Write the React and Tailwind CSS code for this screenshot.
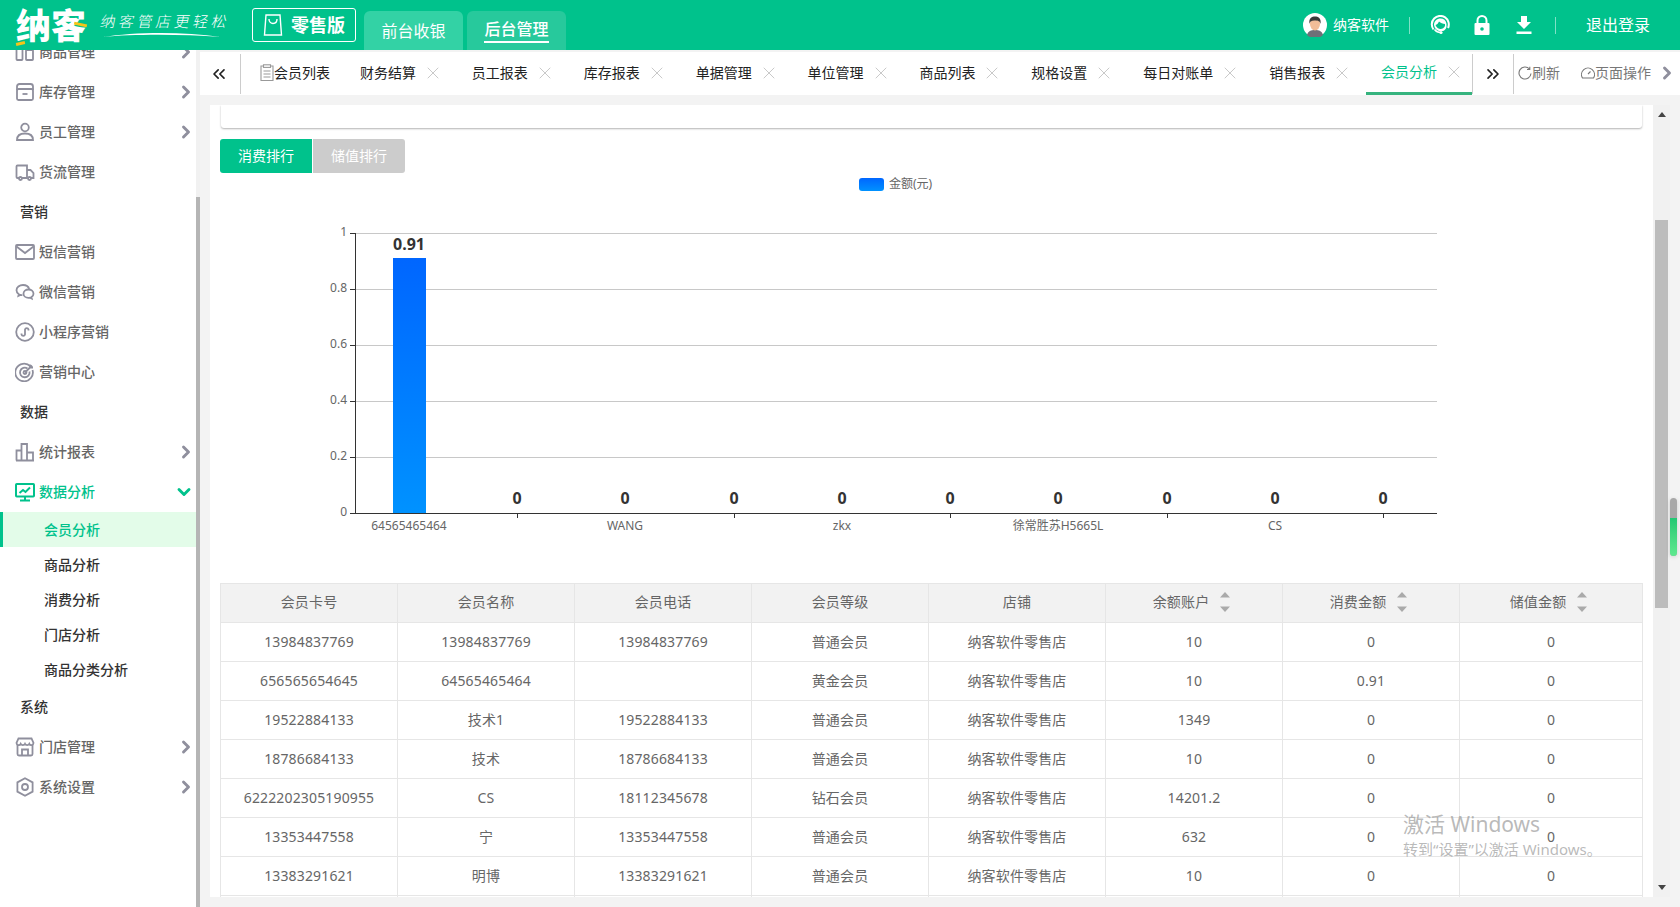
import React from "react";
import { ChevronRight, ChevronDown, ChevronsLeft, ChevronsRight, X } from "lucide-react";

const ICON = "w-5 h-5 shrink-0 fill-none stroke-[#8f8f9d] stroke-[1.8]";

const GoodsIcon = () => (
  <svg viewBox="0 0 20 20" className={ICON}>
    <rect x="1.5" y="2" width="6" height="16" rx="0.8" />
    <rect x="11" y="8" width="7" height="10" rx="0.8" />
  </svg>
);
const StockIcon = () => (
  <svg viewBox="0 0 20 20" className={ICON}>
    <path d="M2 8V4.500C2 3 3 2 4.500 2h11C17 2 18 3 18 4.500V8" />
    <rect x="2" y="7" width="16" height="11" rx="1.500" />
    <path d="M7.500 12h5" />
  </svg>
);
const StaffIcon = () => (
  <svg viewBox="0 0 20 20" className={ICON}>
    <circle cx="10" cy="5.500" r="3.800" />
    <path d="M2 18c0-4 3-6.500 8-6.500s8 2.500 8 6.500z" />
  </svg>
);
const TruckIcon = () => (
  <svg viewBox="0 0 20 20" className={ICON}>
    <path d="M4 16H2.500C2 16 1.500 15.500 1.500 15V4.500C1.500 4 2 3.500 2.500 3.500h9.500V16H7" />
    <path d="M12 8h3.500l3 3v5H16" />
    <circle cx="5.500" cy="16.500" r="1.500" />
    <circle cx="14.500" cy="16.500" r="1.500" />
  </svg>
);
const MailIcon = () => (
  <svg viewBox="0 0 20 20" className={ICON}>
    <rect x="1" y="3" width="18" height="14" rx="1" />
    <path d="M1.500 4.500L10 11l8.500-6.500" />
  </svg>
);
const WechatIcon = () => (
  <svg viewBox="0 0 20 20" className={ICON}>
    <path d="M8 3C4.400 3 1.500 5.300 1.500 8.200c0 1.600.9 3 2.300 4l-.4 1.700 2-1c.7.200 1.300.3 2 .3" />
    <path d="M8 3c3 0 5.500 1.700 6.200 4" />
    <path d="M13.500 7.500c-2.800 0-5 1.900-5 4.200s2.200 4.200 5 4.200c.6 0 1.100-.1 1.600-.2l1.700.9-.3-1.500c1.200-.8 2-2 2-3.300 0-2.400-2.200-4.300-5-4.300z" />
  </svg>
);
const MiniIcon = () => (
  <svg viewBox="0 0 20 20" className={ICON}>
    <circle cx="10" cy="10" r="8.800" />
    <path d="M6.500 11.500v1a1.800 1.800 0 003.500 0v-5a1.800 1.800 0 013.500 0v1" />
  </svg>
);
const TargetIcon = () => (
  <svg viewBox="0 0 20 20" className={ICON}>
    <path d="M15.500 4.500A8.800 8.800 0 1017.500 8" />
    <path d="M12.500 6.500a4.800 4.800 0 102 3" />
    <circle cx="10" cy="10.500" r="1.500" />
    <path d="M10 10.500L17 3.500M15 2.500v3h3" />
  </svg>
);
const ChartIcon = () => (
  <svg viewBox="0 0 20 20" className={ICON}>
    <path d="M1.500 18.500V8.500h5v10M6.500 18.500V2h5.500v16.500M12 18.500V10.500h6v8M1 18.500h18" />
  </svg>
);
const MonitorIcon = () => (
  <svg viewBox="0 0 20 20" className="w-5 h-5 shrink-0 fill-none stroke-[#00c28c] stroke-[2]">
    <rect x="1" y="2" width="18" height="12.500" rx="0.800" />
    <path d="M10 14.500V18M5 18.500h10M4.500 11l3.500-3 2.500 2 4.500-4.500" />
  </svg>
);
const StoreIcon = () => (
  <svg viewBox="0 0 20 20" className={ICON}>
    <path d="M2.500 8v9a1.500 1.500 0 001.500 1.500h12a1.500 1.500 0 001.500-1.500V8" />
    <path d="M3.500 1.500h13L18.500 6a2.200 2.200 0 01-4.200.8 2.400 2.400 0 01-4.300 0 2.400 2.400 0 01-4.300 0A2.200 2.200 0 011.500 6z" />
    <path d="M7 18.500V12.500h6v6" />
  </svg>
);
const GearIcon = () => (
  <svg viewBox="0 0 20 20" className={ICON}>
    <path d="M10 1.200l7.600 4.200v9.200L10 18.800l-7.600-4.200V5.400z" />
    <circle cx="10" cy="10" r="3" />
  </svg>
);

const groups = [
  { icon: GoodsIcon, label: "商品管理", arrow: true },
  { icon: StockIcon, label: "库存管理", arrow: true },
  { icon: StaffIcon, label: "员工管理", arrow: true },
  { icon: TruckIcon, label: "货流管理" },
  { title: "营销" },
  { icon: MailIcon, label: "短信营销" },
  { icon: WechatIcon, label: "微信营销" },
  { icon: MiniIcon, label: "小程序营销" },
  { icon: TargetIcon, label: "营销中心" },
  { title: "数据" },
  { icon: ChartIcon, label: "统计报表", arrow: true },
  { icon: MonitorIcon, label: "数据分析", open: true },
  { sub: "会员分析", active: true },
  { sub: "商品分析" },
  { sub: "消费分析" },
  { sub: "门店分析" },
  { sub: "商品分类分析" },
  { title: "系统" },
  { icon: StoreIcon, label: "门店管理", arrow: true },
  { icon: GearIcon, label: "系统设置", arrow: true },
];

const tabs = [
  { name: "财务结算" },
  { name: "员工报表" },
  { name: "库存报表" },
  { name: "单据管理" },
  { name: "单位管理" },
  { name: "商品列表" },
  { name: "规格设置" },
  { name: "每日对账单", wide: true },
  { name: "销售报表" },
  { name: "会员分析", active: true },
];

const rows = [
  ["13984837769", "13984837769", "13984837769", "普通会员", "纳客软件零售店", "10", "0", "0"],
  ["656565654645", "64565465464", "", "黄金会员", "纳客软件零售店", "10", "0.91", "0"],
  ["19522884133", "技术1", "19522884133", "普通会员", "纳客软件零售店", "1349", "0", "0"],
  ["18786684133", "技术", "18786684133", "普通会员", "纳客软件零售店", "10", "0", "0"],
  ["6222202305190955", "CS", "18112345678", "钻石会员", "纳客软件零售店", "14201.2", "0", "0"],
  ["13353447558", "宁", "13353447558", "普通会员", "纳客软件零售店", "632", "0", "0"],
  ["13383291621", "明博", "13383291621", "普通会员", "纳客软件零售店", "10", "0", "0"],
];

const columns = ["会员卡号", "会员名称", "会员电话", "会员等级", "店铺", "余额账户", "消费金额", "储值金额"];

function Sidebar() {
  return (
    <aside className="flex w-[200px] shrink-0 bg-white">
      <div className="w-[196px] overflow-hidden">
        <div className="-mt-[18px]">
          {groups.map((item, i) => {
            if (item.title) {
              return (
                <div key={i} className="flex h-10 items-center pl-5 text-sm font-medium text-[#333]">
                  {item.title}
                </div>
              );
            }
            if (item.sub) {
              return (
                <div
                  key={i}
                  className={
                    item.active
                      ? "flex h-[35px] items-center border-l-[3px] border-[#00c28c] bg-[#e3fce9] pl-[41px] text-sm font-medium text-[#00c28c]"
                      : "flex h-[35px] items-center pl-11 text-sm font-medium text-[#333]"
                  }
                >
                  {item.sub}
                </div>
              );
            }
            const Icon = item.icon;
            return (
              <div
                key={i}
                className={`flex h-10 items-center gap-1 pl-[15px] text-sm font-medium ${
                  item.open ? "text-[#00c28c]" : "text-[#666]"
                }`}
              >
                <Icon />
                <span className="flex-1">{item.label}</span>
                {item.arrow && <ChevronRight size={20} strokeWidth={3.5} className="text-[#8f8f9d]" />}
                {item.open && <ChevronDown size={20} strokeWidth={3.5} className="mr-[2px] text-[#00c28c]" />}
              </div>
            );
          })}
        </div>
      </div>
      <div className="flex w-1 flex-col bg-[#f1f1f1]">
        <div className="mt-[147px] flex-1 bg-[#b5b5b5]" />
      </div>
    </aside>
  );
}

function Header() {
  return (
    <header className="relative flex h-[50px] shrink-0 items-center bg-[#00c28c] text-white">
      <div className="relative ml-[16px] w-[72px] whitespace-nowrap text-[35px] font-black leading-none">
        纳客
        <span className="absolute bottom-[-2px] left-0 h-[3px] w-[9px] -rotate-12 bg-[#f5c518]" />
        <span className="absolute right-[1px] top-[15px] h-[3px] w-[13px] rotate-12 bg-[#f5c518]" />
      </div>
      <div className="relative ml-[12px] w-[136px]">
        <div className="-skew-x-12 whitespace-nowrap pb-[7px] text-[15px] font-light leading-none tracking-[3.500px]">
          纳客管店更轻松
        </div>
        <svg viewBox="0 0 120 6" className="absolute bottom-[-2px] left-[3px] h-[6px] w-[118px]">
          <path d="M0 5C30 0 80-1 120 5 80 2 30 2 0 5z" fill="#fff" />
        </svg>
      </div>
      <button className="ml-[16px] flex h-[34px] w-[104px] items-center gap-2 rounded-[3px] border border-white pl-[10px] text-lg font-bold">
        <svg viewBox="0 0 20 22" className="h-[22px] w-5 fill-none stroke-white stroke-[1.4]">
          <path d="M3 1h14l1.500 20H1.500zM6 5c0 6 8 6 8 0" />
        </svg>
        零售版
      </button>
      <div className="ml-2 flex h-full items-end gap-1 self-end">
        <div className="flex h-[39px] w-[99px] items-center justify-center rounded-t-md bg-[#33d2a5] text-base">
          前台收银
        </div>
        <div className="flex h-[39px] w-[99px] items-center justify-center rounded-t-md bg-[#27c99c] text-base font-medium">
          <span className="border-b-2 border-white pb-[1px] leading-[22px]">后台管理</span>
        </div>
      </div>
      <div className="ml-auto flex items-center pr-[30px]">
        <svg viewBox="0 0 24 24" className="h-6 w-6">
          <circle cx="12" cy="12" r="12" fill="#fff" />
          <path d="M4 22c1-4 4-5 8-5s7 1 8 5a12 12 0 01-16 0z" fill="#6f6f78" />
          <ellipse cx="12" cy="11" rx="5" ry="6.500" fill="#f2bd98" />
          <path d="M6.500 11C5.500 5 9 3.500 12 3.500S18.500 5 17.500 11C17 8 15 7.500 12 7.500S7 8 6.500 11z" fill="#3a3a3a" />
        </svg>
        <span className="ml-[6px] text-sm">纳客软件</span>
        <span className="ml-5 h-[17px] w-px bg-white/50" />
        <svg viewBox="0 0 20 20" className="ml-5 h-5 w-5">
          <path d="M3.500 14.500a8.500 8.500 0 1114.500-1.500" fill="none" stroke="#fff" strokeWidth="2" />
          <path d="M4 10c0-4 3-6.500 6.500-6.500 3 0 5.500 1.800 6 5.500v3c-.5 2-2 3.500-3.500 4H9C6.500 15.500 4.500 13 4 10z" fill="#fff" />
          <path d="M5.500 10c1.500-.5 3-2 3.500-3.500 1.500 1.500 4 2.500 6 2.500v2c-1 2-2.500 3-4.500 3S6.500 12.500 5.500 10z" fill="#00c28c" />
          <path d="M4.500 14.500c1.500 2 3.500 3 6 3" fill="none" stroke="#fff" strokeWidth="1.400" />
          <circle cx="11" cy="17.500" r="1.600" fill="#fff" />
        </svg>
        <svg viewBox="0 0 16 20" className="ml-[24px] h-5 w-4">
          <path d="M3.500 9V5.500a4.500 4.500 0 019 0V9" fill="none" stroke="#fff" strokeWidth="2" />
          <rect x="0.500" y="8" width="15" height="12" rx="1" fill="#fff" />
          <circle cx="8" cy="14" r="1.800" fill="#00c28c" />
        </svg>
        <svg viewBox="0 0 16 20" className="ml-[26px] h-5 w-4 fill-white">
          <path d="M5 1h6v6h4l-7 7-7-7h4z" />
          <rect x="0.500" y="16.500" width="15" height="2.500" />
        </svg>
        <span className="ml-[23px] h-[17px] w-px bg-white/50" />
        <span className="ml-[30px] text-base">退出登录</span>
      </div>
    </header>
  );
}

function TabBar() {
  return (
    <div className="flex h-[45px] shrink-0 border-t-2 border-[#f3f3f3] bg-white pb-px pt-[2px] text-sm text-[#222]">
      <div className="flex w-[41px] items-center justify-center border-r border-[#ccc] pr-[2px]">
        <ChevronsLeft size={20} strokeWidth={2} />
      </div>
      <div className="flex w-[1232px] border-r border-[#ccc]">
        <div className="flex w-[98px] items-center whitespace-nowrap pb-[3px] pl-[19px]">
          <svg viewBox="0 0 14 17" className="h-[17px] w-[14px] shrink-0 fill-none stroke-[#999] stroke-[1.1]">
            <path d="M3.500 2H1v14.500h12V2h-2.500" />
            <rect x="3.500" y="0.800" width="7" height="2.600" />
            <path d="M3.500 7h7M3.500 10h7M3.500 13h7" />
          </svg>
          会员列表
        </div>
        {tabs.map((tab) => (
          <div
            key={tab.name}
            className={`ml-[6px] flex items-center gap-[7px] pl-[15px] ${tab.wide ? "w-[120px]" : "w-[106px]"} ${
              tab.active ? "-mb-px border-b-[3px] border-[#36b37e] pb-[3px] text-[#00c28c]" : "pb-[3px]"
            }`}
          >
            <span className="whitespace-nowrap">{tab.name}</span>
            <X size={20} strokeWidth={1.1} className="shrink-0 text-[#c4c4c4]" />
          </div>
        ))}
      </div>
      <div className="flex w-[41px] items-center justify-center border-r border-[#ccc]">
        <ChevronsRight size={20} strokeWidth={2} />
      </div>
      <div className="flex flex-1 items-center pb-[3px] pl-[4px] text-[#777]">
        <svg viewBox="0 0 14 14" className="h-[14px] w-[14px] fill-none stroke-[#777] stroke-[1.1]">
          <path d="M11.500 3A6 6 0 1013 7.500M11.800 0.800V3.500H9" />
        </svg>
        刷新
        <svg viewBox="0 0 14 14" className="ml-[21px] h-[14px] w-[14px] fill-none stroke-[#777] stroke-[1.1]">
          <path d="M1.500 12A6.500 6.500 0 1112.500 12zM7 8l2.500-2.500" />
        </svg>
        页面操作
        <ChevronRight size={20} strokeWidth={3.5} className="ml-[6px] text-[#8f8f9d]" />
      </div>
    </div>
  );
}

function Chart() {
  const yTicks = [
    [233, "1"],
    [289, "0.8"],
    [345, "0.6"],
    [401, "0.4"],
    [457, "0.2"],
    [513, "0"],
  ];
  const centers = [409, 517, 625, 734, 842, 950, 1058, 1167, 1275, 1383];
  const xLabels = [
    [409, "64565465464"],
    [625, "WANG"],
    [842, "zkx"],
    [1058, "徐常胜苏H5665L"],
    [1275, "CS"],
  ];
  return (
    <svg viewBox="220 173 1422 410" className="h-[410px] w-[1422px]">
      <defs>
        <linearGradient id="bar" x1="0" y1="0" x2="0" y2="1">
          <stop offset="0" stopColor="#0066ff" />
          <stop offset="1" stopColor="#0092ff" />
        </linearGradient>
      </defs>
      <rect x="859" y="178" width="25" height="13" rx="3" fill="url(#bar)" />
      <text x="889" y="188" fontSize="12" fill="#666">金额(元)</text>
      {yTicks.map(([y, label]) => (
        <g key={label}>
          {y !== 513 && <line x1="355" x2="1437" y1={y + 0.5} y2={y + 0.5} stroke="#c8c8c8" />}
          <line x1="350" x2="355" y1={y + 0.5} y2={y + 0.5} stroke="#333" />
          <text x="347" y={y + 3} fontSize="12" fill="#666" textAnchor="end">{label}</text>
        </g>
      ))}
      <rect x="393" y="258" width="33" height="255" fill="url(#bar)" />
      <line x1="355.500" x2="355.500" y1="233" y2="514" stroke="#333" />
      <line x1="350" x2="1437" y1="513.500" y2="513.500" stroke="#333" />
      {[517, 734, 950, 1167, 1383].map((x) => (
        <line key={x} x1={x + 0.5} x2={x + 0.5} y1="513" y2="518" stroke="#333" />
      ))}
      {centers.map((x, i) => (
        <text key={x} x={x} y={i === 0 ? 250 : 504} fontSize="16" fontWeight="700" fill="#333" textAnchor="middle">
          {i === 0 ? "0.91" : "0"}
        </text>
      ))}
      {xLabels.map(([x, label]) => (
        <text key={label} x={x} y="530" fontSize="12" fill="#666" textAnchor="middle">{label}</text>
      ))}
    </svg>
  );
}

const SortArrows = () => (
  <svg viewBox="0 0 10 20" className="ml-[11px] h-5 w-[10px] fill-[#aaa]">
    <path d="M5 0l5 5.500H0zM0 14.500h10L5 20z" />
  </svg>
);

function MemberTable() {
  return (
    <table className="w-[1422px] table-fixed border-collapse text-sm tracking-[0.15px] text-[#666]">
      <colgroup>
        {columns.map((c, i) => (
          <col key={c} className={i === 7 ? "w-[183px]" : "w-[177px]"} />
        ))}
      </colgroup>
      <thead>
        <tr className="h-[39px] bg-[#f2f2f2]">
          {columns.map((c, i) => (
            <th key={c} className="border border-[#e6e6e6] p-0 font-normal">
              <span className={`inline-flex items-center pb-[2px] align-middle ${i > 4 ? "pr-[5px]" : ""}`}>
                {c}
                {i > 4 && <SortArrows />}
              </span>
            </th>
          ))}
        </tr>
      </thead>
      <tbody>
        {rows.map((row, r) => (
          <tr key={r} className="h-[39px]">
            {row.map((cell, i) => (
              <td key={i} className="border border-[#e6e6e6] p-0 text-center">{cell}</td>
            ))}
          </tr>
        ))}
        <tr className="h-[39px]">
          {columns.map((c) => (
            <td key={c} className="border border-[#e6e6e6] p-0" />
          ))}
        </tr>
      </tbody>
    </table>
  );
}

export default function App() {
  return (
    <div className="relative flex h-[907px] w-[1680px] flex-col overflow-hidden bg-[#f3f3f3] font-['Noto_Sans','Noto_Sans_CJK_SC',sans-serif]">
      <Header />
      <div className="flex min-h-0 flex-1">
        <Sidebar />
        <div className="flex min-w-0 flex-1 flex-col">
          <TabBar />
          <main className="flex min-h-0 flex-1 p-[10px]">
            <div className="min-w-0 flex-1 overflow-hidden bg-white pl-[10px]">
              <div className="ml-px h-[23px] w-[1421px] rounded-b-[3px] bg-white shadow-[0_1px_2px_rgba(0,0,0,0.3)]" />
              <div className="mt-[11px] flex h-[34px] text-sm text-white">
                <div className="flex w-[92px] items-center justify-center rounded-l-[3px] bg-[#00c28c]">消费排行</div>
                <div className="ml-px flex w-[92px] items-center justify-center rounded-r-[3px] bg-[#ccc]">储值排行</div>
              </div>
              <Chart />
              <MemberTable />
            </div>
            <div className="flex w-[17px] shrink-0 flex-col items-center bg-[#f1f1f1]">
              <svg viewBox="0 0 8 5" className="mt-[7px] h-[5px] w-2 fill-[#444]">
                <path d="M4 0l4 5H0z" />
              </svg>
              <div className="mt-[103px] h-[388px] w-[13px] bg-[#bcbcbc]" />
              <svg viewBox="0 0 8 5" className="mb-[7px] mt-auto h-[5px] w-2 fill-[#444]">
                <path d="M0 0h8L4 5z" />
              </svg>
            </div>
          </main>
        </div>
      </div>

      {/* floating side indicator */}
      <div className="absolute left-[1670px] top-[498px] h-[58px] w-[7px] overflow-hidden rounded-full bg-[#a8a8a8] shadow-[0_1px_4px_rgba(0,0,0,0.15)]">
        <div className="mt-5 h-[38px] bg-gradient-to-b from-[#1fc873] to-[#5fe98f]" />
      </div>

      {/* windows activation watermark */}
      <div className="pointer-events-none absolute left-[1403px] top-[811px] text-[#9b9b9b]/70">
        <div className="text-[21px] leading-[27px]">激活 Windows</div>
        <div className="text-[15px] leading-[22px]">转到“设置”以激活 Windows。</div>
      </div>
    </div>
  );
}
